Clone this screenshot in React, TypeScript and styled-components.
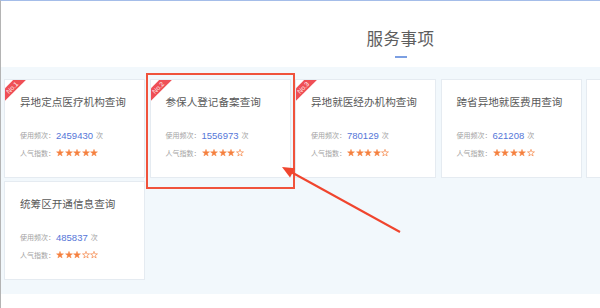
import React from 'react';
import styled, { createGlobalStyle } from 'styled-components';

const GlobalStyle = createGlobalStyle`
  html, body {
    margin: 0;
    padding: 0;
    background: #fff;
    overflow: hidden;
  }
  body {
    font-family: "Noto Sans CJK SC", "Noto Sans", sans-serif;
  }
`;

type Service = {
  title: string;
  count: number;
  stars: number;
  rank?: number;
};

const services: Service[] = [
  { title: '异地定点医疗机构查询', count: 2459430, stars: 5, rank: 1 },
  { title: '参保人登记备案查询', count: 1556973, stars: 4, rank: 2 },
  { title: '异地就医经办机构查询', count: 780129, stars: 4, rank: 3 },
  { title: '跨省异地就医费用查询', count: 621208, stars: 4 },
  { title: '异地就医结算政策查询', count: 512376, stars: 4 },
  { title: '统筹区开通信息查询', count: 485837, stars: 3 },
];

const Page = styled.div`
  position: relative;
  width: 800px;
  height: 308px;
  border-top: 1px solid #a4bde9;
  border-left: 1px solid #b4b4b4;
  box-sizing: border-box;
`;

const Header = styled.header`
  height: 66px;
  display: flex;
  flex-direction: column;
  align-items: center;
  padding-top: 26px;
  box-sizing: border-box;
`;

const Heading = styled.h2`
  margin: 0;
  font-size: 16.5px;
  line-height: 22px;
  font-weight: 400;
  color: #5e5e5e;
  letter-spacing: 0.5px;
`;

const Underline = styled.span`
  display: block;
  width: 12px;
  height: 2px;
  margin-top: 7px;
  background: #7c9fe2;
`;

const Board = styled.section`
  background: #f2f8fc;
  padding: 12px 3px 14px 3px;
  display: grid;
  grid-template-columns: repeat(5, 141px);
  grid-auto-rows: 99px;
  column-gap: 4.5px;
  row-gap: 3px;
`;

const Card = styled.div`
  position: relative;
  overflow: hidden;
  background: #fff;
  border: 1px solid #e5ebf1;
  box-sizing: border-box;
  padding: 15px 0 0 15px;
`;

const Ribbon = styled.span`
  position: absolute;
  left: -14px;
  top: 3px;
  width: 42px;
  height: 9px;
  background: #ef4f56;
  color: #fff;
  font-family: "Liberation Sans", Arial, sans-serif;
  font-size: 6.5px;
  line-height: 9px;
  text-align: center;
  transform: rotate(-45deg);
`;

const Title = styled.div`
  font-size: 10.6px;
  line-height: 14px;
  color: #595959;
  white-space: nowrap;
`;

const InfoRow = styled.div<{ $gap: number }>`
  display: flex;
  align-items: center;
  height: 12px;
  margin-top: ${p => p.$gap}px;
`;

const Label = styled.span`
  font-size: 7px;
  color: #a3a3a3;
  width: 36px;
  white-space: nowrap;
`;

const Count = styled.span`
  font-family: "Liberation Sans", Arial, sans-serif;
  font-size: 9.5px;
  color: #5576d8;
`;

const Unit = styled.span`
  font-size: 7px;
  color: #a3a3a3;
  margin-left: 3px;
`;

const Stars = styled.span`
  display: flex;
  gap: 0.5px;
`;

const Overlay = styled.svg`
  position: absolute;
  left: -1px;
  top: -1px;
  pointer-events: none;
`;

const STAR =
  '5,0 6.18,3.38 9.76,3.45 6.9,5.62 7.94,9.05 5,7 2.06,9.05 3.1,5.62 0.24,3.45 3.82,3.38';

const Star: React.FC<{ filled: boolean }> = ({ filled }) => (
  <svg width="8" height="8" viewBox="-0.5 -0.5 11 11">
    <polygon
      points={STAR}
      fill={filled ? '#f5803e' : 'none'}
      stroke="#f5803e"
      strokeWidth={filled ? 0.6 : 0.9}
      strokeLinejoin="round"
    />
  </svg>
);

const ServiceCard: React.FC<{ item: Service }> = ({ item }) => (
  <Card>
    {item.rank && <Ribbon>No.{item.rank}</Ribbon>}
    <Title>{item.title}</Title>
    <InfoRow $gap={20}>
      <Label>使用频次：</Label>
      <Count>{item.count}</Count>
      <Unit>次</Unit>
    </InfoRow>
    <InfoRow $gap={6}>
      <Label>人气指数：</Label>
      <Stars>
        {[0, 1, 2, 3, 4].map(i => (
          <Star key={i} filled={i < item.stars} />
        ))}
      </Stars>
    </InfoRow>
  </Card>
);

const App: React.FC = () => (
  <>
    <GlobalStyle />
    <Page>
      <Header>
        <Heading>服务事项</Heading>
        <Underline />
      </Header>
      <Board>
        {services.map(s => (
          <ServiceCard key={s.title} item={s} />
        ))}
      </Board>
      {/* annotation: highlight box and arrow */}
      <Overlay width="800" height="308">
        <rect x="147" y="74" width="147" height="114" fill="none" stroke="#f0533c" strokeWidth="2" />
        <line x1="400" y1="232" x2="292" y2="172.5" stroke="#f0452e" strokeWidth="2" />
        <polygon points="282,167 295,168.2 290,177.4" fill="#f0452e" />
      </Overlay>
    </Page>
  </>
);

export default App;
